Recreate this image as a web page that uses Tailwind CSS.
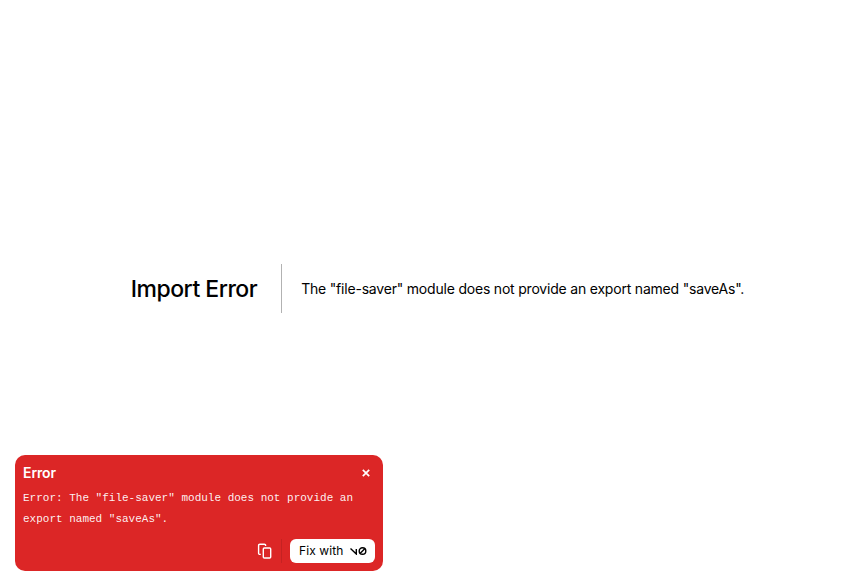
<!DOCTYPE html>
<html>
<head>
<meta charset="utf-8">
<script src="https://cdn.jsdelivr.net/npm/@tailwindcss/browser@4"></script>
</head>
<body class="bg-white font-['Inter',sans-serif] text-black">
<main class="h-[576px] w-[846px] flex items-center justify-center">
  <div class="flex items-center ml-[29px]">
    <h1 class="text-[23px] tracking-[-0.5px] pt-[2px] leading-[47px] font-medium pr-[24px] mr-[19px] border-r border-black/30">Import Error</h1>
    <h2 class="text-[14px] tracking-[-0.2px] leading-[49px] font-normal">The "file-saver" module does not provide an export named "saveAs".</h2>
  </div>
</main>
<div class="fixed left-[15px] bottom-[7px] w-[368px] h-[116px] rounded-[10px] bg-[#dc2626] text-white flex flex-col px-2 pt-2 pb-2">
  <div class="flex items-center justify-between h-5">
    <span class="text-[14px] leading-5 font-semibold tracking-[-0.1px]">Error</span>
    <svg class="mr-[5px]" width="8" height="8" viewBox="0 0 8 8" fill="none" stroke="white" stroke-width="1.7"><path d="M0.8 0.8l6.4 6.4M7.2 0.8l-6.4 6.4"/></svg>
  </div>
  <p class="mt-[5px] font-['Liberation_Mono',monospace] text-[11px] leading-[21px] text-white/95">Error: The "file-saver" module does not provide an<br>export named "saveAs".</p>
  <div class="mt-auto flex items-center justify-end">
    <svg width="16" height="16" viewBox="0 0 16 16" fill="none" stroke="white" stroke-width="1.4"><rect x="6.3" y="5" width="7.4" height="10" rx="1"/><path d="M3.8 11.4H2.8A1.2 1.2 0 0 1 1.6 10.2V2.4A1.2 1.2 0 0 1 2.8 1.2H7.4A1.2 1.2 0 0 1 8.6 2.4V3"/></svg>
    <div class="w-px h-6 bg-black/10 mx-[8px]"></div>
    <button class="h-6 w-[85px] rounded-[6px] bg-white text-black text-[12px] tracking-[0.1px] leading-6 flex items-center justify-start pl-[9px] gap-[7px]">
      <span>Fix with</span>
      <svg width="17" height="8" viewBox="0 0 17 8" fill="none" stroke="black" stroke-width="1.4"><path d="M0.5 1.5L6.3 7V2"/><circle cx="12.5" cy="4" r="3.3"/><path d="M10 6.5l5-5"/></svg>
    </button>
  </div>
</div>
</body>
</html>
